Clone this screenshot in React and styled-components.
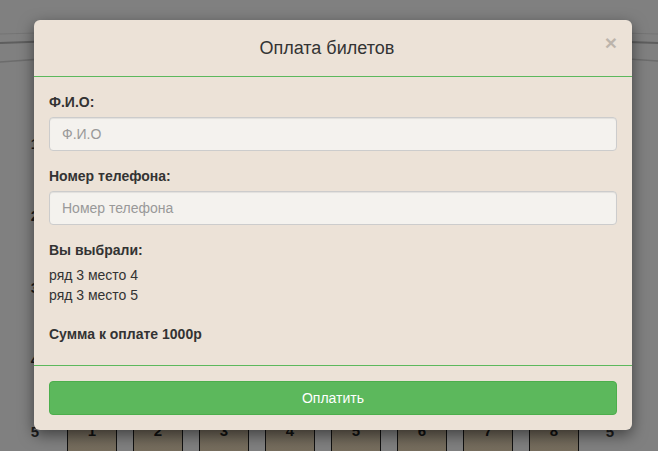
import React from "react"
import styled, { createGlobalStyle } from "styled-components"

const GlobalStyle = createGlobalStyle`
    html, body {
        margin: 0;
        padding: 0;
        background: #808080;
        font-family: "Liberation Sans", Arial, sans-serif;
        font-size: 14px;
        color: #333;
    }
    * { box-sizing: border-box; }
`

const rows = [1, 2, 3, 4, 5]
const seats = [1, 2, 3, 4, 5, 6, 7, 8]

export default function App() {
    return (
        <Page>
            <GlobalStyle />
            <Screen viewBox="0 0 658 70" preserveAspectRatio="none">
                <path d="M0 34 Q329 22 658 34" stroke="#747474" strokeWidth="1" fill="none" />
                <path d="M0 43 Q329 30 658 43" stroke="#5e5e5e" strokeWidth="2" fill="none" />
                <path d="M0 62 Q329 36 658 61" stroke="#6c6c6c" strokeWidth="1.5" fill="none" />
            </Screen>
            <Hall>
                {rows.map(r => (
                    <Row key={r}>
                        <RowNum>{r}</RowNum>
                        {seats.map(s => (
                            <Seat key={s}>{s}</Seat>
                        ))}
                        <RowNum>{r}</RowNum>
                    </Row>
                ))}
            </Hall>

            <Modal>
                <Header>
                    <Title>Оплата билетов</Title>
                    <Close>×</Close>
                </Header>
                <Body>
                    <Group>
                        <Label>Ф.И.О:</Label>
                        <Input placeholder="Ф.И.О" />
                    </Group>
                    <Group>
                        <Label>Номер телефона:</Label>
                        <Input placeholder="Номер телефона" />
                    </Group>
                    <Label>Вы выбрали:</Label>
                    <Line>ряд 3 место 4</Line>
                    <Line>ряд 3 место 5</Line>
                    <Total>Сумма к оплате 1000р</Total>
                </Body>
                <Footer>
                    <PayButton>Оплатить</PayButton>
                </Footer>
            </Modal>
        </Page>
    )
}

const Page = styled.div`
    position: relative;
    width: 658px;
    height: 451px;
    overflow: hidden;
    background: #808080;
`

const Screen = styled.svg`
    display: block;
    width: 658px;
    height: 70px;
`

const Hall = styled.div`
    display: flex;
    flex-direction: column;
    gap: 38px;
    padding: 63px 0 0 20px;
`

const Row = styled.div`
    display: flex;
    gap: 16px;
    height: 34px;
`

const RowNum = styled.div`
    width: 30px;
    padding-top: 2px;
    text-align: center;
    font-weight: bold;
    font-size: 15px;
    color: #1e1e1e;
    margin-right: 1px;
`

const Seat = styled.div`
    width: 50px;
    height: 40px;
    border: 1px solid #111;
    border-bottom: none;
    background: linear-gradient(#6b6457, #7b7160);
    text-align: center;
    padding-top: 0;
    font-weight: bold;
    font-size: 15px;
    color: #111;
`

const Modal = styled.div`
    position: absolute;
    left: 34px;
    top: 20px;
    width: 598px;
    height: 410px;
    background: #ece2d7;
    border-radius: 6px;
    box-shadow: 0 5px 15px rgba(0, 0, 0, 0.5);
    display: flex;
    flex-direction: column;
`

const Header = styled.div`
    display: flex;
    align-items: flex-start;
    height: 57px;
    padding: 15px;
    border-bottom: 1px solid #5cb85c;
`

const Title = styled.h4`
    flex: 1;
    margin: 0;
    text-align: center;
    font-size: 18px;
    font-weight: normal;
    line-height: 26px;
    color: #333;
`

const Close = styled.span`
    margin-top: -3px;
    font-size: 21px;
    font-weight: bold;
    line-height: 1;
    color: #000;
    opacity: 0.2;
`

const Body = styled.div`
    display: flex;
    flex-direction: column;
    padding: 15px 15px 0;
    height: 289px;
    border-bottom: 1px solid #5cb85c;
`

const Group = styled.div`
    display: flex;
    flex-direction: column;
    margin-bottom: 15px;
`

const Label = styled.label`
    font-weight: bold;
    line-height: 20px;
    margin-bottom: 5px;
`

const Input = styled.input`
    height: 34px;
    padding: 6px 12px;
    font-family: inherit;
    font-size: 14px;
    color: #555;
    background: #f4f2ee;
    border: 1px solid #ccc;
    border-radius: 4px;
    box-shadow: inset 0 1px 1px rgba(0, 0, 0, 0.075);
    &::placeholder { color: #999; }
`

const Line = styled.div`
    line-height: 20px;
`

const Total = styled.div`
    margin-top: 19px;
    font-weight: bold;
    line-height: 20px;
`

const Footer = styled.div`
    padding: 15px;
`

const PayButton = styled.button`
    display: block;
    width: 100%;
    height: 34px;
    font-family: inherit;
    font-size: 14px;
    color: #fff;
    background: #5cb85c;
    border: 1px solid #4cae4c;
    border-radius: 4px;
`
